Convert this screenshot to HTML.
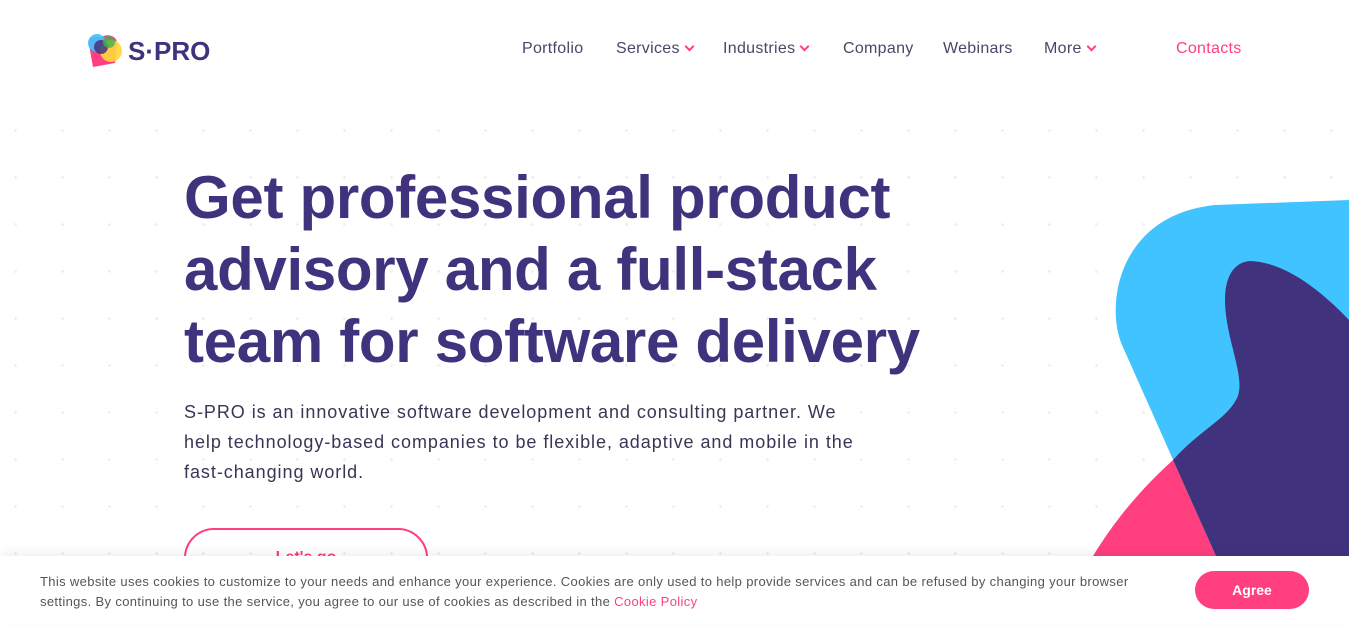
<!DOCTYPE html>
<html><head><meta charset="utf-8"><style>
*{margin:0;padding:0;box-sizing:border-box}
body{width:1349px;height:625px;overflow:hidden;position:relative;background:#fff;font-family:"Liberation Sans",sans-serif}
.dots{position:absolute;left:0;top:110px;width:1349px;height:520px;background-image:radial-gradient(circle,#efeff2 1.4px,transparent 1.5px);background-size:47px 47px;background-position:-8px -3px}
.nav a{position:absolute;top:40px;font-size:16px;color:#4b4668;text-decoration:none;white-space:nowrap;letter-spacing:0.3px}
.chev{display:inline-block;width:7px;height:7px;border-right:2px solid #ff3f7f;border-bottom:2px solid #ff3f7f;transform:rotate(45deg);margin-left:6px;position:relative;top:-3px}
h1{position:absolute;left:184px;top:162px;font-size:60px;line-height:72px;color:#40327d;font-weight:bold;letter-spacing:-0.3px;white-space:nowrap}
p.lead{position:absolute;left:184px;top:397px;width:720px;font-size:18px;line-height:30px;color:#3b3555;letter-spacing:0.95px;white-space:nowrap}
.btn{position:absolute;left:184px;top:528px;width:244px;height:60px;border:2px solid #ff3f7f;border-radius:30px;color:#ff3f7f;font-weight:bold;font-size:16px;text-align:center;line-height:56px}
.cookie{position:absolute;left:0;top:556px;width:1349px;height:69px;background:#fff;box-shadow:0 -4px 10px rgba(0,0,0,.06)}
.cookie p{position:absolute;left:40px;top:16px;width:1130px;font-size:13px;line-height:20px;color:#555;letter-spacing:0.35px}
.cookie p span{color:#ff3f7f}
.agree{position:absolute;left:1195px;top:15px;width:114px;height:38px;border-radius:19px;background:#ff3f7f;color:#fff;font-weight:bold;font-size:14px;text-align:center;line-height:38px}
</style></head><body>
<div class="dots"></div>
<svg style="position:absolute;left:0;top:0" width="1349" height="625">
<path d="M1173,460 L1216,556 L1093,556 C1115,520 1140,490 1173,460 Z" fill="#ff3f80"/>
<path d="M1215,205 L1349,200 L1349,556 L1216,556 L1122,345 C1105,305 1118,215 1215,205 Z" fill="#40c3ff"/>
<path d="M1250,261 C1290,262 1330,300 1349,320 L1349,556 L1216,556 L1173,460 C1200,430 1225,420 1236,400 C1248,380 1225,340 1225,300 C1225,275 1235,262 1250,261 Z" fill="#41327e"/>
<g transform="translate(87,33)">
<path d="M2,12 C0,4 10,2 14,5 C18,0 30,2 30,10 L28,30 L6,34 Z" fill="#ff3f80"/>
<circle cx="10" cy="10" r="9" fill="#40c3ff" opacity=".9"/>
<circle cx="24" cy="18" r="11" fill="#ffd83a" opacity=".9"/>
<circle cx="14" cy="14" r="7" fill="#41327e" opacity=".85"/>
<circle cx="22" cy="9" r="6" fill="#3fb34f" opacity=".8"/>
</g>
<text x="128" y="60" font-family="Liberation Sans" font-weight="bold" font-size="26" fill="#40327d">S·PRO</text>
</svg>
<div class="nav">
<a style="left:522px">Portfolio</a>
<a style="left:616px">Services<span class="chev"></span></a>
<a style="left:723px">Industries<span class="chev"></span></a>
<a style="left:843px">Company</a>
<a style="left:943px">Webinars</a>
<a style="left:1044px">More<span class="chev"></span></a>
<a style="left:1176px;color:#ff3f7f">Contacts</a>
</div>
<h1>Get professional product<br>advisory and a full-stack<br>team for software delivery</h1>
<p class="lead">S-PRO is an innovative software development and consulting partner. We<br>help technology-based companies to be flexible, adaptive and mobile in the<br>fast-changing world.</p>
<div class="btn">Let's go</div>
<div class="cookie"><p>This website uses cookies to customize to your needs and enhance your experience. Cookies are only used to help provide services and can be refused by changing your browser settings. By continuing to use the service, you agree to our use of cookies as described in the <span>Cookie Policy</span></p><div class="agree">Agree</div></div>
</body></html>
